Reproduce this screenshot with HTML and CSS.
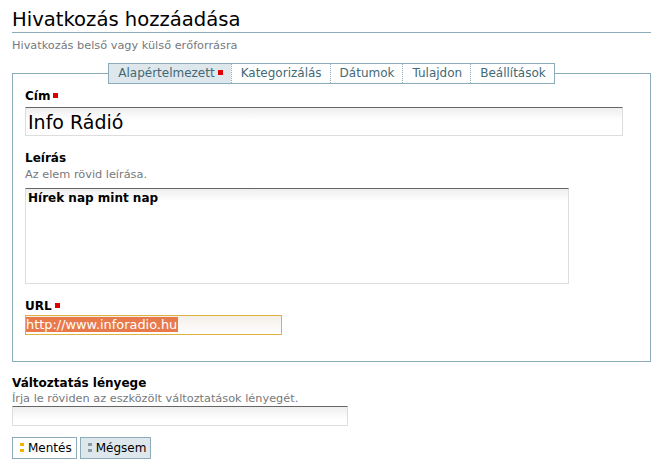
FILE: index.html
```html
<!DOCTYPE html>
<html lang="hu">
<head>
  <meta charset="UTF-8">
  <title>Hivatkozás hozzáadása</title>
  <link rel="stylesheet" href="styles.css">
</head>
<body>

  <div class="page">
    <h1 class="title">Hivatkozás hozzáadása</h1>
    <p class="desc">Hivatkozás belső vagy külső erőforrásra</p>

    <fieldset class="box">
      <legend class="tabs">
        <span class="tab current">Alapértelmezett<span class="req"></span></span><span class="tab">Kategorizálás</span><span class="tab">Dátumok</span><span class="tab">Tulajdon</span><span class="tab">Beállítások</span>
      </legend>

      <div class="field first">
        <label>Cím<span class="req"></span></label>
        <input type="text" class="big" value="Info Rádió">
      </div>

      <div class="field">
        <label>Leírás</label>
        <div class="help">Az elem rövid leírása.</div>
        <textarea class="area">Hírek nap mint nap</textarea>
      </div>

      <div class="field">
        <label>URL<span class="req"></span></label>
        <div class="url"><span class="sel">http://www.inforadio.hu</span></div>
      </div>
    </fieldset>

    <div class="field change">
      <label>Változtatás lényege</label>
      <div class="help">Írja le röviden az eszközölt változtatások lényegét.</div>
      <input type="text" class="small">
    </div>

    <div class="buttons">
      <button class="btn save"><span class="dots"></span>Mentés</button>
      <button class="btn cancel"><span class="dots"></span>Mégsem</button>
    </div>
  </div>

</body>
</html>
```

FILE: styles.css
```css
body {
  margin: 0;
  background-color: #fff;
  color: #000;
  font-family: "DejaVu Sans", Verdana, sans-serif;
}
.page {
  padding: 8px 11px 0 12px;
}
.title {
  margin: 0;
  font-size: 19.6px;
  font-weight: normal;
  line-height: 24px;
  border-bottom: 1px solid #8cacbb;
}
.desc {
  margin: 6px 0 11px 0;
  font-size: 11.3px;
  color: #76797c;
}
.box {
  margin: 0;
  padding: 0 12px 26px 12px;
  border: 1px solid #8cacbb;
  min-width: 0;
}
.tabs {
  margin: 0 auto;
  padding: 0;
  display: flex;
  border: 1px solid #8cacbb;
  background-color: #fff;
}
.tab {
  font-size: 12px;
  line-height: 19px;
  padding: 0 8px 0 9px;
  color: #436976;
  border-left: 1px dotted #8cacbb;
}
.tab:first-child {
  border-left: none;
}
.tab.current {
  background-color: #dee7ec;
}
.req {
  display: inline-block;
  width: 5px;
  height: 5px;
  margin-left: 3px;
  vertical-align: 2px;
  background-color: #d00;
}
.field {
  margin-top: 14px;
}
.field.first {
  margin-top: 4px;
}
.field label {
  display: block;
  font-size: 12px;
  font-weight: bold;
  line-height: 16px;
}
.help {
  font-size: 11.3px;
  color: #76797c;
  line-height: 17px;
}
input, textarea {
  font-family: "DejaVu Sans", Verdana, sans-serif;
  border: 1px solid #ddd;
  border-top-color: #666;
  background: linear-gradient(#eee, #fff 12px);
  margin: 0;
  padding: 0 2px;
  box-sizing: border-box;
}
.big {
  margin-top: 3px;
  width: 598px;
  height: 29px;
  font-size: 19px;
  color: #000;
}
.area {
  display: block;
  margin-top: 5px;
  margin-bottom: 10px;
  padding-top: 2px;
  width: 544px;
  height: 96px;
  font-size: 12px;
  font-weight: bold;
  resize: none;
}
.url {
  margin-top: 1px;
  width: 257px;
  height: 20px;
  box-sizing: border-box;
  border: 1px solid #e0b040;
  background: linear-gradient(#f4eee8, #fff);
  font-size: 12.9px;
  line-height: 18px;
}
.sel {
  background-color: #e8794b;
  color: #fff;
  padding-right: 1px;
}
.change {
  margin-top: 13px;
}
.change .help {
  line-height: 15px;
}
.small {
  display: block;
  width: 336px;
  height: 20px;
  font-size: 12px;
}
.buttons {
  margin-top: 11px;
  display: flex;
  gap: 3px;
}
.btn {
  font-family: "DejaVu Sans", Verdana, sans-serif;
  font-size: 12px;
  height: 22px;
  padding: 0 4px 0 7px;
  border: 1px solid #8cacbb;
  background-color: #fff;
  color: #000;
  display: flex;
  align-items: center;
}
.btn.cancel {
  background-color: #dee7ec;
}
.dots {
  width: 4px;
  height: 10px;
  margin-right: 4px;
  background: linear-gradient(#f0b400 0 3px, transparent 3px 6px, #f0b400 6px 9px, transparent 9px);
}
.cancel .dots {
  background: linear-gradient(#8c9aa3 0 3px, transparent 3px 6px, #8c9aa3 6px 9px, transparent 9px);
}
```
